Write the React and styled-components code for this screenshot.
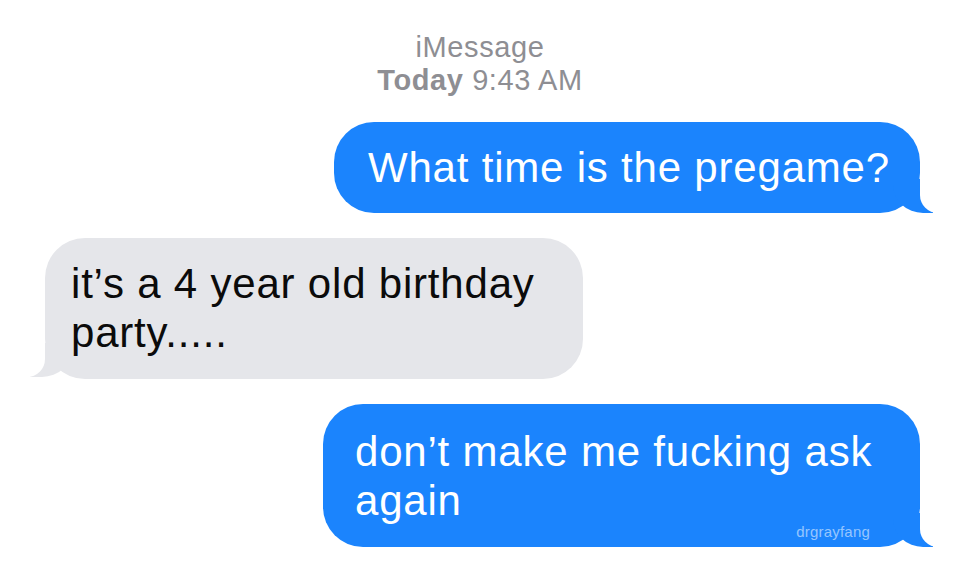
import React from "react";
import styled, { createGlobalStyle, css } from "styled-components";

const GlobalStyle = createGlobalStyle`
  html, body {
    margin: 0;
    padding: 0;
    background: #ffffff;
  }
  body {
    font-family: "Liberation Sans", Arial, Helvetica, sans-serif;
    -webkit-font-smoothing: antialiased;
  }
`;

const BLUE = "#1b84fd";
const GRAY = "#e5e6ea";

const Screen = styled.div`
  width: 960px;
  height: 572px;
  overflow: hidden;
  background: #fff;
  display: flex;
  flex-direction: column;
`;

const Header = styled.header`
  padding-top: 31px;
  display: flex;
  flex-direction: column;
  align-items: center;
  color: #8e8e93;
  font-size: 29px;
  line-height: 33px;
  letter-spacing: 0.6px;
`;

const Service = styled.div`
  font-weight: 400;
`;

const Stamp = styled.div`
  font-weight: 400;
  b {
    font-weight: 700;
  }
`;

const Thread = styled.div`
  display: flex;
  flex-direction: column;
  gap: 25px;
  margin-top: 25px;
  padding: 0 40px 0 45px;
`;

// tail drawn with two pseudo boxes: one bubble-coloured, one white cut-out
const tailMe = css`
  align-self: flex-end;
  background: ${BLUE};
  color: #fff;
  &::before {
    content: "";
    position: absolute;
    bottom: 0;
    right: -13px;
    width: 40px;
    height: 34px;
    background: ${BLUE};
    border-bottom-left-radius: 30px 28px;
  }
  &::after {
    content: "";
    position: absolute;
    bottom: 0;
    right: -50px;
    width: 50px;
    height: 34px;
    background: #fff;
    border-bottom-left-radius: 18px;
  }
`;

const tailThem = css`
  align-self: flex-start;
  background: ${GRAY};
  color: #0b0b0b;
  &::before {
    content: "";
    position: absolute;
    bottom: 2px;
    left: -15px;
    width: 42px;
    height: 34px;
    background: ${GRAY};
    border-bottom-right-radius: 30px 28px;
  }
  &::after {
    content: "";
    position: absolute;
    bottom: 2px;
    left: -50px;
    width: 50px;
    height: 34px;
    background: #fff;
    border-bottom-right-radius: 18px;
  }
`;

const Bubble = styled.div`
  position: relative;
  box-sizing: border-box;
  width: ${(p) => p.$width}px;
  padding: ${(p) => p.$padTop}px 20px ${(p) => p.$padBottom}px ${(p) => p.$padLeft}px;
  border-radius: 40px;
  font-size: 42px;
  line-height: 49px;
  letter-spacing: 0.8px;
  ${(p) => (p.$me ? tailMe : tailThem)}
`;

const Text = styled.span`
  position: relative;
  display: block;
  z-index: 1;
`;

const Watermark = styled.span`
  position: absolute;
  right: 50px;
  bottom: 9px;
  z-index: 1;
  font-size: 15px;
  line-height: 13px;
  letter-spacing: 0.2px;
  color: rgba(255, 255, 255, 0.55);
`;

const messages = [
  { id: 1, me: true, width: 586, padLeft: 34, padTop: 21, padBottom: 21, text: "What time is the pregame?" },
  { id: 2, me: false, width: 538, padLeft: 26, padTop: 21, padBottom: 22, text: "it’s a 4 year old birthday party....." },
  { id: 3, me: true, width: 597, padLeft: 32, padTop: 23, padBottom: 22, text: "don’t make me fucking ask again", mark: "drgrayfang" },
];

export default function App() {
  return (
    <>
      <GlobalStyle />
      <Screen>
        <Header>
          <Service>iMessage</Service>
          <Stamp>
            <b>Today</b> 9:43 AM
          </Stamp>
        </Header>
        <Thread>
          {messages.map((m) => (
            <Bubble
              key={m.id}
              $me={m.me}
              $width={m.width}
              $padLeft={m.padLeft}
              $padTop={m.padTop}
              $padBottom={m.padBottom}
            >
              <Text>{m.text}</Text>
              {m.mark && <Watermark>{m.mark}</Watermark>}
            </Bubble>
          ))}
        </Thread>
      </Screen>
    </>
  );
}
